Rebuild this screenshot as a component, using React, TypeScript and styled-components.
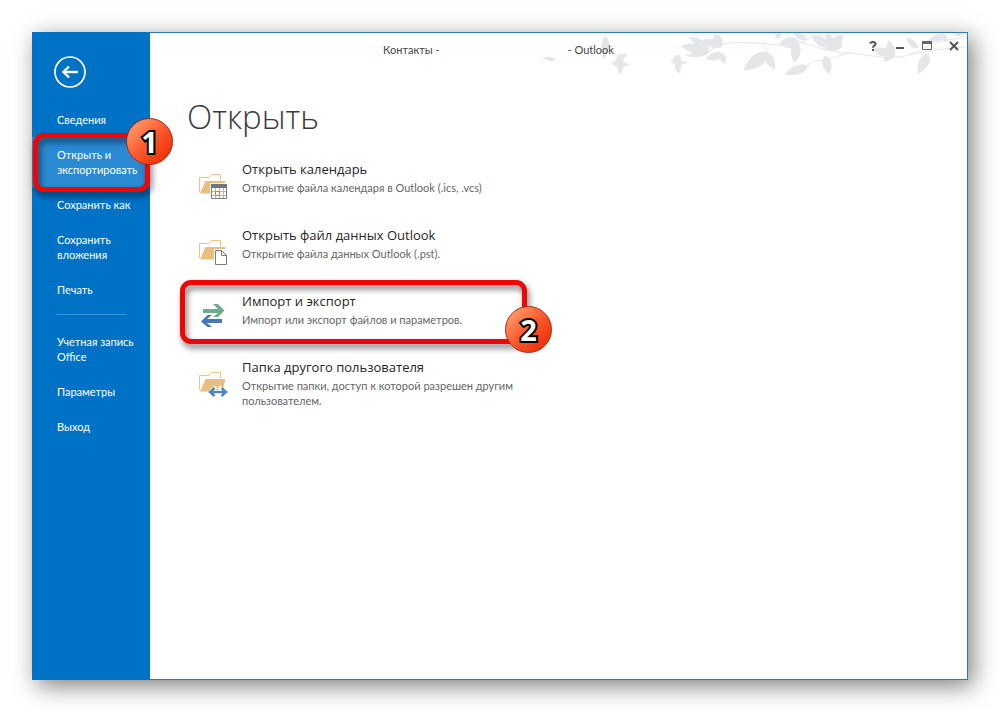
import React from 'react';
import styled, { createGlobalStyle } from 'styled-components';

const GlobalStyle = createGlobalStyle`
  *, *::before, *::after { box-sizing: border-box; }
  body {
    margin: 0;
    background: #fff;
    font-family: Lato, 'Open Sans', sans-serif;
    font-size: 11px;
    line-height: 15px;
    color: #444;
  }
  button {
    margin: 0;
    padding: 0;
    border: 0;
    background: none;
    font: inherit;
    color: inherit;
    text-align: left;
    cursor: pointer;
  }
`;

const Page = styled.div`
  display: flex;
  min-height: 100vh;
  padding: 32px;
`;

const Window = styled.div`
  display: flex;
  flex: 1;
  background: #fff;
  box-shadow: 5px 6px 22px rgba(0, 0, 0, 0.5);
`;

const Sidebar = styled.nav`
  flex: none;
  width: 118px;
  padding-top: 24px;
  background: #0072c6;
  color: #fff;
`;

const BackButton = styled.button`
  display: block;
  width: 32px;
  height: 32px;
  margin: 0 0 14px 22px;
  svg { display: block; }
`;

const NavItem = styled.button<{ $active?: boolean }>`
  position: relative;
  display: block;
  width: 100%;
  padding: 10px 8px 10px 25px;
  background: ${(p) => (p.$active ? '#2a8ad4' : 'transparent')};
`;

const Divider = styled.hr`
  height: 1px;
  margin: 7px 24px 9px;
  border: 0;
  background: #3d94d6;
`;

const Main = styled.main`
  position: relative;
  flex: 1;
  min-width: 0;
  border: 1px solid #2a7bb0;
  border-left: 0;
`;

const Artwork = styled.svg`
  position: absolute;
  top: 0;
  right: 0;
  pointer-events: none;
`;

const TitleBar = styled.header`
  position: relative;
  display: flex;
  height: 36px;
`;

const WindowTitle = styled.div`
  display: flex;
  flex: 1;
  justify-content: center;
  gap: 128px;
  padding: 9px 12px 0 0;
`;

const Controls = styled.div`
  display: flex;
`;

const ControlButton = styled.button`
  display: flex;
  justify-content: center;
  align-items: center;
  width: 27px;
  height: 26px;
`;

const Content = styled.section`
  padding: 24px 30px 30px;
`;

const Heading = styled.h1`
  margin: 0 0 7px 7px;
  font-family: 'Open Sans', 'Noto Sans', sans-serif;
  font-size: 33px;
  line-height: 48px;
  font-weight: 300;
  color: #3b3b3b;
`;

const Command = styled.button`
  position: relative;
  display: flex;
  gap: 13px;
  width: 100%;
  max-width: 347px;
  min-height: 66px;
  padding: 10px 8px 10px 19px;
`;

const CommandIcon = styled.svg`
  flex: none;
  width: 30px;
  height: 28px;
  margin-top: 14px;
`;

const CommandTitle = styled.span`
  display: block;
  font-family: 'Open Sans', 'Noto Sans', sans-serif;
  font-size: 13px;
  line-height: 22px;
  color: #262626;
`;

const CommandText = styled.span`
  display: block;
  color: #666;
`;

const Highlight = styled.span<{ $wide?: boolean }>`
  position: absolute;
  inset: ${(p) => (p.$wide ? '0 0 2px 0' : '-4px 0 -5px 1px')};
  border: 5px solid #ee0505;
  border-radius: 11px;
  filter: drop-shadow(2px 4px 3px rgba(0, 0, 0, 0.55));
  pointer-events: none;
`;

const Badge = styled.span<{ $wide?: boolean }>`
  position: absolute;
  z-index: 1;
  top: ${(p) => (p.$wide ? 26 : -19)}px;
  right: ${(p) => (p.$wide ? -25 : -23)}px;
  display: flex;
  justify-content: center;
  align-items: center;
  width: 47px;
  height: 47px;
  border: 1px solid #a92612;
  border-radius: 50%;
  background: linear-gradient(135deg, #ff9d6c 10%, #fb5a2c 50%, #f02c05 90%);
  color: #fff;
  font-family: 'Noto Sans', sans-serif;
  font-size: 29px;
  font-weight: 700;
  -webkit-text-stroke: 4px #000;
  paint-order: stroke fill;
`;

function Marker({ label, wide }: { label: string; wide?: boolean }) {
  return (
    <>
      <Highlight $wide={wide} />
      <Badge $wide={wide}>{label}</Badge>
    </>
  );
}

/* A pointed leaf running from (x1, y1) to (x2, y2), bulging on each side in proportion to w. */
function leaf(x1: number, y1: number, x2: number, y2: number, w: number) {
  const dx = x2 - x1;
  const dy = y2 - y1;
  const len = Math.hypot(dx, dy);
  const nx = (-dy / len) * w * 1.3;
  const ny = (dx / len) * w * 1.3;
  const ax = x1 + dx * 0.4;
  const ay = y1 + dy * 0.4;
  const bx = x1 + dx * 0.8;
  const by = y1 + dy * 0.8;
  return `M${x1} ${y1}C${ax + nx} ${ay + ny} ${bx + nx} ${by + ny} ${x2} ${y2}C${bx - nx} ${by - ny} ${ax - nx} ${ay - ny} ${x1} ${y1}Z`;
}

const leaves: [number, number, number, number, number][] = [
  [222, 102, 228, 32, 12],
  [453, 62, 538, 80, 15],
  [478, 36, 538, 72, 12],
  [466, 93, 540, 82, 9],
  [572, 70, 556, 28, 15],
  [520, 44, 572, 64, 13],
  [526, 102, 580, 86, 12],
  [584, 117, 574, 84, 9],
  [640, 136, 714, 82, 19],
  [734, 135, 708, 82, 13],
  [748, 56, 808, 50, 17],
  [794, 114, 800, 50, 15],
  [736, 40, 752, 24, 8],
  [786, 22, 832, 44, 9],
  [764, 148, 834, 124, 14],
  [897, 147, 886, 92, 14],
  [846, 32, 894, 64, 14],
  [892, 24, 906, 66, 13],
  [938, 28, 908, 66, 15],
  [880, 74, 938, 62, 10],
  [1028, 72, 1084, 88, 13],
  [1060, 108, 1096, 78, 12],
  [1076, 46, 1086, 94, 13],
  [1128, 38, 1164, 70, 10],
  [1164, 147, 1194, 86, 15],
  [1198, 116, 1186, 84, 8],
  [1190, 48, 1250, 30, 10],
  [1234, 24, 1250, 50, 9],
  [1270, 30, 1306, 24, 7],
];

const branches = [
  'M486 34C496 26 504 28 502 42',
  'M538 80C556 66 570 58 600 54S720 56 778 64C800 56 820 50 834 42S890 32 908 26',
  'M800 50C840 56 900 84 950 84S1060 108 1130 92S1230 72 1306 66',
  'M834 124C840 112 850 108 876 106S930 90 960 82',
  'M1140 88C1170 80 1200 50 1260 44S1290 30 1306 34',
  'M714 82L694 58',
];

function Foliage() {
  return (
    <Artwork width="437" height="52" viewBox="0 24 1311 156" aria-hidden="true">
      <g fill="#e4e6e7">
        {leaves.map((l) => (
          <path key={l.join()} d={leaf(...l)} />
        ))}
        <path d="M34 97L58 95L78 103L62 110L50 104Z" />
        <path d="M244 116Q258 112 262 90Q278 84 292 90Q278 102 280 112L300 118L280 126Q280 140 272 148Q262 142 262 126Z" />
        <path d="M420 108Q432 106 434 92Q446 84 454 98L452 108L474 112L454 120Q448 144 454 147Q430 138 434 118Z" />
      </g>
      <g fill="none" stroke="#e4e6e7" strokeWidth="3">
        {branches.map((d) => (
          <path key={d} d={d} />
        ))}
      </g>
    </Artwork>
  );
}

function Folder() {
  return (
    <>
      <path d="M.5 20V5.5H10L12.500 2.500H21.500V8.500" fill="#fff" stroke="#e6c58c" />
      <path d="M1 21.500L6.500 9H26.500L23.500 21.500Z" fill="#e8bf7c" />
    </>
  );
}

function CalendarIcon() {
  return (
    <CommandIcon viewBox="0 0 30 28" aria-hidden="true">
      <Folder />
      <path d="M11 11h18v17H11z" fill="#fff" />
      <path d="M12.500 13.500h15v13h-15z" fill="#fff" stroke="#808080" />
      <path d="M12 12h16v4H12z" fill="#6d7680" />
      <path d="M16.500 16v10M20.500 16v10M24.500 16v10M13 19.500h14M13 23.500h14" stroke="#b5b5b5" />
      <path d="M16.500 19.500h4v4h-4z" fill="#fff" stroke="#e07840" />
    </CommandIcon>
  );
}

function DataFileIcon() {
  return (
    <CommandIcon viewBox="0 0 30 28" aria-hidden="true">
      <Folder />
      <path d="M15 11h14v17H15z" fill="#fff" />
      <path d="M16.500 12.500h6l5 5v9h-11z" fill="#fff" stroke="#7d7d7d" />
      <path d="M22.500 12.500v5h5" fill="none" stroke="#7d7d7d" />
    </CommandIcon>
  );
}

function TransferIcon() {
  return (
    <CommandIcon viewBox="0 0 30 28" aria-hidden="true">
      <path d="M4 5h15L14 0h5l6.500 6.500L19 13h-5l5-4H4z" fill="#6faa90" />
      <path d="M23 15H8l5-4H8.500L2 17.500L8.500 23H13l-5-4h15z" fill="#4478bd" />
    </CommandIcon>
  );
}

function SharedFolderIcon() {
  return (
    <CommandIcon viewBox="0 0 30 28" aria-hidden="true">
      <Folder />
      <path
        d="M11 22L17 17M11 22L17 27M26 22L20 17M26 22L20 27M11 22H26"
        stroke="#fff"
        strokeWidth="4"
      />
      <path
        d="M12 22H26M15.500 18L11 22L15.500 26M22.500 18L27 22L22.500 26"
        fill="none"
        stroke="#4a86c8"
        strokeWidth="2.400"
      />
    </CommandIcon>
  );
}

const primaryNav = ['Сведения', 'Открыть и экспортировать', 'Сохранить как', 'Сохранить вложения', 'Печать'];
const secondaryNav = ['Учетная запись Office', 'Параметры', 'Выход'];
const activeNav = 'Открыть и экспортировать';

const commands = [
  { icon: <CalendarIcon />, title: 'Открыть календарь', text: 'Открытие файла календаря в Outlook (.ics, .vcs)' },
  { icon: <DataFileIcon />, title: 'Открыть файл данных Outlook', text: 'Открытие файла данных Outlook (.pst).' },
  {
    icon: <TransferIcon />,
    title: 'Импорт и экспорт',
    text: 'Импорт или экспорт файлов и параметров.',
    marker: '2',
  },
  {
    icon: <SharedFolderIcon />,
    title: 'Папка другого пользователя',
    text: 'Открытие папки, доступ к которой разрешен другим пользователем.',
  },
];

export default function App() {
  return (
    <>
      <GlobalStyle />
      <Page>
        <Window>
          <Sidebar>
            <BackButton aria-label="Назад">
              <svg width="32" height="32" viewBox="0 0 32 32" fill="none" stroke="#fff">
                <circle cx="16" cy="16" r="15" strokeWidth="1.700" />
                <path d="M9.500 16H24" strokeWidth="2.400" />
                <path d="M15 10.500L9.500 16L15 21.500" strokeWidth="2.400" />
              </svg>
            </BackButton>
            {primaryNav.map((label) => (
              <NavItem key={label} $active={label === activeNav}>
                {label}
                {label === activeNav && <Marker label="1" />}
              </NavItem>
            ))}
            <Divider />
            {secondaryNav.map((label) => (
              <NavItem key={label}>{label}</NavItem>
            ))}
          </Sidebar>
          <Main>
            <Foliage />
            <TitleBar>
              <WindowTitle>
                <span>Контакты -</span>
                <span>- Outlook</span>
              </WindowTitle>
              <Controls>
                <ControlButton aria-label="Справка">
                  <svg width="10" height="10" viewBox="0 0 10 10" fill="none" stroke="#555" strokeWidth="2">
                    <path d="M2 2.500C3 .5 8 .5 7.500 3.200C7.300 4.500 5 4.500 5 6.800M5 8V10" />
                  </svg>
                </ControlButton>
                <ControlButton aria-label="Свернуть">
                  <svg width="10" height="10" viewBox="0 0 10 10">
                    <path d="M1 6h8v2H1z" fill="#555" />
                  </svg>
                </ControlButton>
                <ControlButton aria-label="Развернуть">
                  <svg width="10" height="10" viewBox="0 0 10 10">
                    <path d="M.5.5h9v8h-9z" fill="none" stroke="#666" />
                    <path d="M0 0h10v3H0z" fill="#666" />
                  </svg>
                </ControlButton>
                <ControlButton aria-label="Закрыть">
                  <svg width="10" height="10" viewBox="0 0 10 10">
                    <path d="M1 1L9 9M9 1L1 9" stroke="#555" strokeWidth="2" />
                  </svg>
                </ControlButton>
              </Controls>
            </TitleBar>
            <Content>
              <Heading>Открыть</Heading>
              {commands.map((c) => (
                <Command key={c.title}>
                  {c.icon}
                  <span>
                    <CommandTitle>{c.title}</CommandTitle>
                    <CommandText>{c.text}</CommandText>
                  </span>
                  {c.marker && <Marker label={c.marker} wide />}
                </Command>
              ))}
            </Content>
          </Main>
        </Window>
      </Page>
    </>
  );
}
